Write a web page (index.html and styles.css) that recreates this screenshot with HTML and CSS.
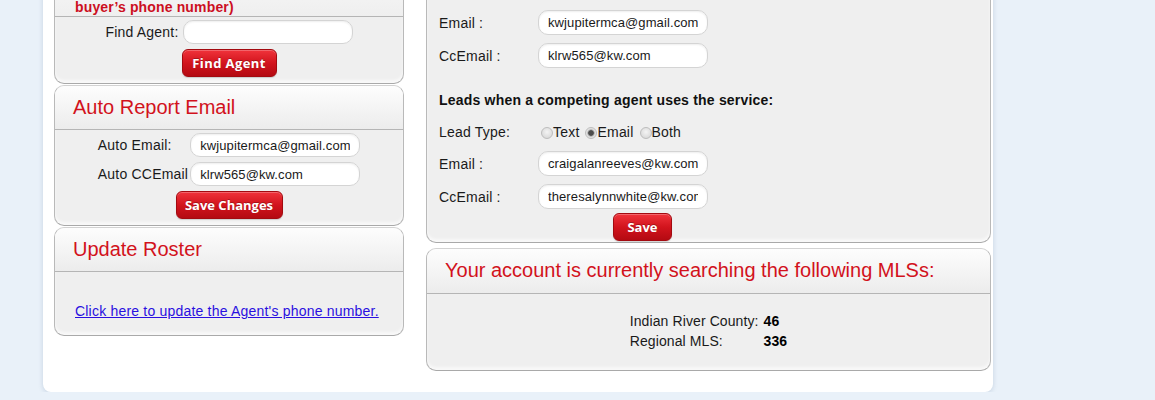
FILE: index.html
```html
<!DOCTYPE html>
<html lang="en">
<head>
<meta charset="utf-8">
<title>Agent settings</title>
<link rel="stylesheet" href="styles.css">
</head>
<body>
<div class="page">
  <div class="col col-left">
    <section class="panel">
      <div class="panel-head note-head">
        <p class="note">buyer’s phone number)</p>
      </div>
      <div class="panel-body center-body">
        <div class="fgrid find-grid">
          <label class="lbl">Find Agent:</label>
          <input class="txt" type="text" value="">
        </div>
        <button class="btn btn-find" type="button">Find Agent</button>
      </div>
    </section>

    <section class="panel">
      <div class="panel-head"><h2>Auto Report Email</h2></div>
      <div class="panel-body center-body">
        <div class="fgrid auto-grid">
          <label class="lbl">Auto Email:</label>
          <input class="txt" type="text" value="kwjupitermca@gmail.com">
          <label class="lbl">Auto CCEmail</label>
          <input class="txt" type="text" value="klrw565@kw.com">
        </div>
        <button class="btn btn-changes" type="button">Save Changes</button>
      </div>
    </section>

    <section class="panel">
      <div class="panel-head"><h2>Update Roster</h2></div>
      <div class="panel-body roster-body">
        <a class="link" href="#">Click here to update the Agent's phone number.</a>
      </div>
    </section>
  </div>

  <div class="col col-right">
    <section class="panel">
      <div class="panel-body leads-body">
        <div class="rform">
          <div class="rgrid">
            <label class="lbl">Email :</label>
            <input class="txt txt-lg" type="text" value="kwjupitermca@gmail.com">
            <label class="lbl">CcEmail :</label>
            <input class="txt txt-lg" type="text" value="klrw565@kw.com">
          </div>
          <p class="leads-title">Leads when a competing agent uses the service:</p>
          <div class="rgrid type-row">
            <span class="lbl">Lead Type:</span>
            <div class="radios">
              <label class="radio"><input type="radio" name="lt">Text</label>
              <label class="radio"><input type="radio" name="lt" checked>Email</label>
              <label class="radio"><input type="radio" name="lt">Both</label>
            </div>
          </div>
          <div class="rgrid second-grid">
            <label class="lbl">Email :</label>
            <input class="txt txt-lg" type="text" value="craigalanreeves@kw.com">
            <label class="lbl">CcEmail :</label>
            <input class="txt txt-lg" type="text" value="theresalynnwhite@kw.com">
          </div>
          <button class="btn btn-save" type="button">Save</button>
        </div>
      </div>
    </section>

    <section class="panel">
      <div class="panel-head mls-head"><h2>Your account is currently searching the following MLSs:</h2></div>
      <div class="panel-body mls-body">
        <div class="mls">
          <span>Indian River County:</span><b>46</b>
          <span>Regional MLS:</span><b>336</b>
        </div>
      </div>
    </section>
  </div>
</div>
</body>
</html>
```

FILE: styles.css
```css
html, body {
  margin: 0;
  padding: 0;
}

body {
  background: #e9f1f9;
  font-family: "Liberation Sans", Arial, sans-serif;
  font-size: 14px;
  color: #1a1a1a;
  overflow: hidden;
}

.page {
  box-sizing: border-box;
  width: 950px;
  margin: -40px 0 0 43px;
  padding: 8px 2px 21px 11px;
  background: #fff;
  border-radius: 0 0 8px 8px;
  box-shadow: 0 1px 5px rgba(70, 100, 140, 0.22);
  display: grid;
  grid-template-columns: 350px 565px;
  column-gap: 22px;
  align-items: start;
}

.col {
  display: flex;
  flex-direction: column;
}

.col-left { gap: 1px; }
.col-right { gap: 5px; }

.panel {
  border: 1px solid #b9b9b9;
  border-top-color: #d2d2d2;
  border-bottom-color: #a9a9a9;
  border-radius: 10px;
  background: #efefef;
  overflow: hidden;
  box-shadow: inset 0 -3px 3px rgba(255, 255, 255, 0.6);
}

.panel-head {
  background: linear-gradient(#fdfdfd, #ececec);
  border-bottom: 1px solid #b5b5b5;
  padding: 9px 18px 10px;
}

.panel-head h2 {
  margin: 0;
  font-weight: normal;
  font-size: 20px;
  line-height: 24px;
  color: #d2121c;
}

.mls-head { padding-bottom: 11px; }

.note-head {
  padding: 30px 20px 1px;
  background: linear-gradient(#f8f8f8, #efefef);
}

.note {
  margin: 0;
  font-weight: bold;
  font-size: 14px;
  line-height: 16px;
  letter-spacing: 0.15px;
  color: #cc0f1f;
}

.center-body {
  display: flex;
  flex-direction: column;
  align-items: center;
  gap: 5px;
  padding: 3px 0 6px;
}

.fgrid {
  display: grid;
  align-items: center;
}

.find-grid {
  grid-template-columns: auto 170px;
  column-gap: 4px;
}

.auto-grid {
  grid-template-columns: auto 170px;
  column-gap: 2px;
  row-gap: 5px;
}

.lbl {
  font-size: 14px;
  line-height: 16px;
  letter-spacing: 0.2px;
  color: #1a1a1a;
}

.txt {
  box-sizing: border-box;
  height: 24px;
  width: 170px;
  margin: 0;
  padding: 0 9px;
  border: 1px solid #d4d4d4;
  border-radius: 10px;
  background: #fff;
  box-shadow: inset 0 1px 2px rgba(0, 0, 0, 0.07);
  font-family: "Liberation Sans", Arial, sans-serif;
  font-size: 13px;
  letter-spacing: 0.1px;
  color: #1a1a1a;
  outline: none;
}

.txt-lg { height: 25px; }

.btn {
  box-sizing: border-box;
  height: 28px;
  margin: 0;
  padding: 0;
  border: 1px solid #a30a10;
  border-radius: 6px;
  background: linear-gradient(#f0333b, #d2141d 50%, #b40a12);
  box-shadow: inset 0 1px 0 rgba(255, 255, 255, 0.25), 0 1px 1px rgba(0, 0, 0, 0.15);
  color: #fff;
  font-family: "Open Sans", "DejaVu Sans", sans-serif;
  font-weight: bold;
  font-size: 13px;
  text-shadow: 0 -1px 0 rgba(0, 0, 0, 0.25);
  cursor: pointer;
}

.btn-find { width: 95px; letter-spacing: 0.4px; }
.btn-changes { width: 107px; }
.btn-save { width: 59px; align-self: center; margin-top: 4px; }

.roster-body {
  padding: 31px 20px 16px;
}

.link {
  font-size: 14px;
  line-height: 16px;
  letter-spacing: 0.2px;
  color: #2a0fe0;
  text-decoration: underline;
}

.leads-body {
  padding: 41px 12px 1px;
}

.rform {
  width: 407px;
  display: flex;
  flex-direction: column;
}

.rgrid {
  display: grid;
  grid-template-columns: 99px 170px;
  row-gap: 8px;
  align-items: center;
}

.leads-title {
  margin: 24px 0 0;
  font-weight: bold;
  font-size: 14px;
  line-height: 16px;
  letter-spacing: 0.2px;
  color: #111;
}

.type-row {
  margin-top: 15px;
  height: 18px;
}

.second-grid { margin-top: 10px; }

.radios {
  display: flex;
  align-items: center;
  white-space: nowrap;
}

.radio {
  display: flex;
  align-items: center;
  margin-right: 3px;
  font-size: 14px;
  line-height: 16px;
  letter-spacing: 0.2px;
  color: #1a1a1a;
}

.radio input {
  appearance: none;
  -webkit-appearance: none;
  box-sizing: border-box;
  width: 12px;
  height: 12px;
  margin: 1px 0 0 3px;
  border: 1px solid #bdbdbd;
  border-radius: 50%;
  background: radial-gradient(circle at 50% 40%, #f4f4f4, #d2d2d2);
}

.radio input:checked {
  background: radial-gradient(circle, #4c4c4c 0 2.4px, #9a9a9a 3px, #dedede 4px, #f4f4f4 100%);
}

.mls-body {
  display: grid;
  justify-content: center;
  padding: 17px 0 19px;
}

.mls {
  display: grid;
  grid-template-columns: auto auto;
  column-gap: 5px;
  font-size: 14px;
  line-height: 20px;
  letter-spacing: 0.1px;
  color: #1a1a1a;
}

.mls b { color: #000; }
```
